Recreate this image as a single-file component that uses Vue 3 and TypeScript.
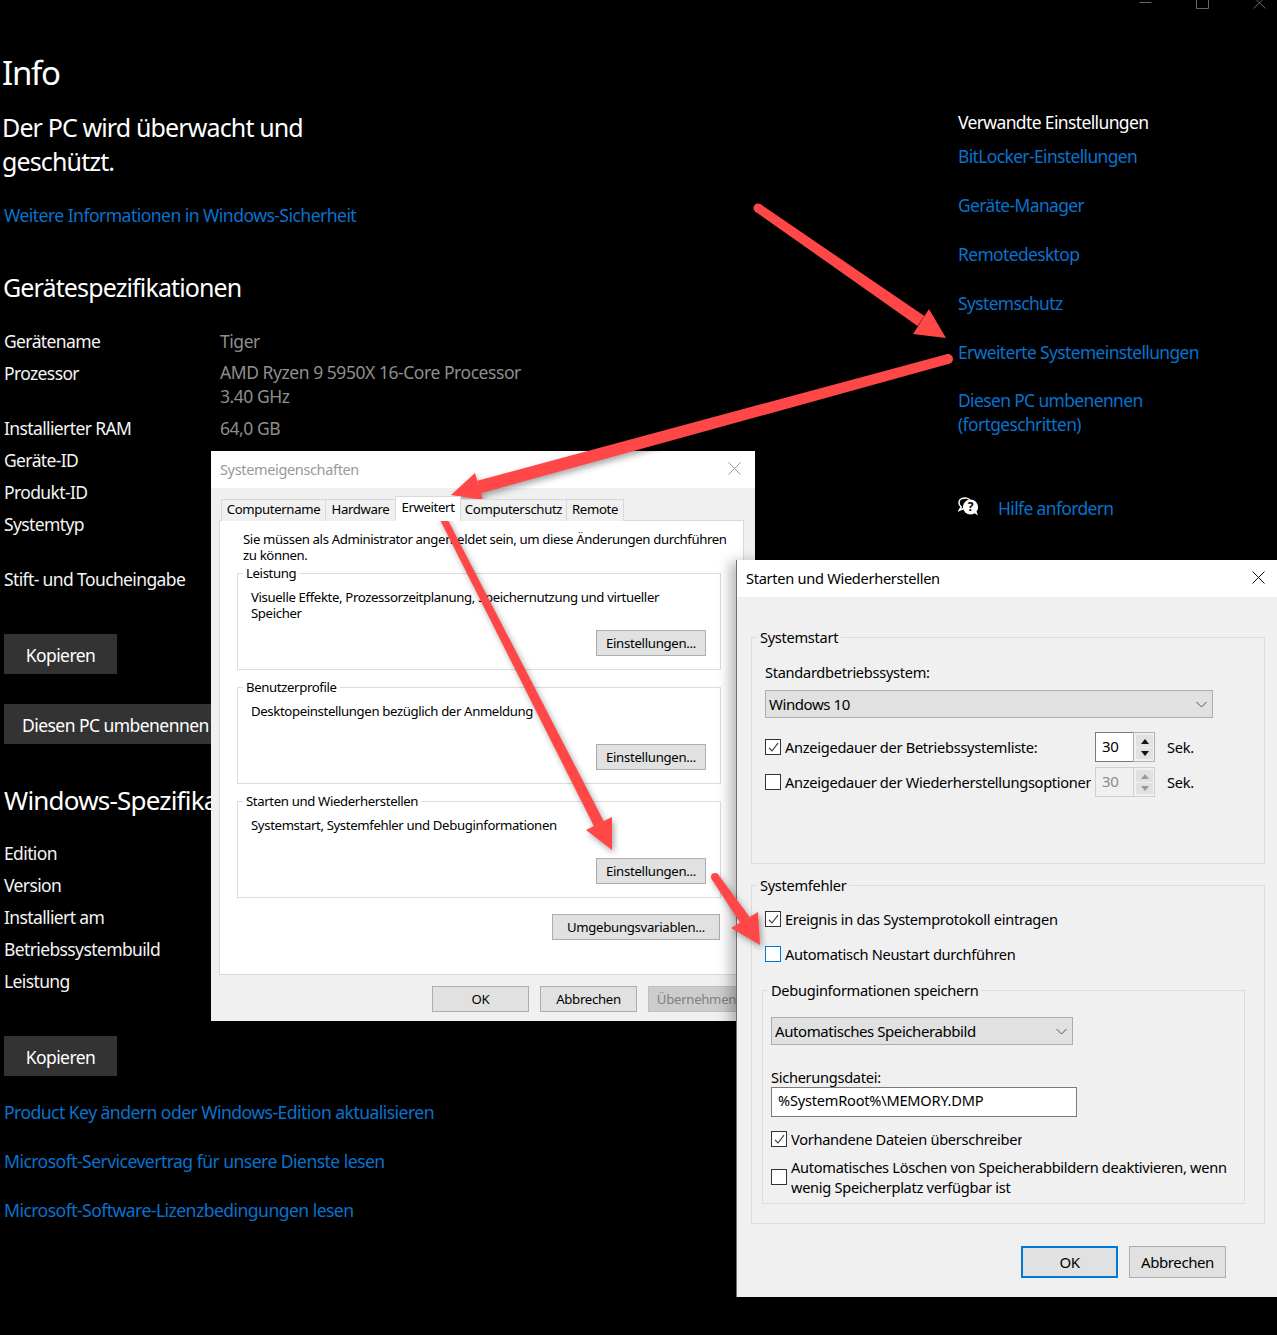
<script setup lang="ts">
type P = [number, number]
interface Arrow { from: P; neck: P; tip: P; b1: P; b2: P; w1: number; w2: number }

const arrows: Arrow[] = [
  { from: [758, 208], neck: [921, 321], tip: [946, 338], b1: [929, 309], b2: [913, 334], w1: 9, w2: 12 },
  { from: [948, 359], neck: [479, 487], tip: [451, 495], b1: [475, 473], b2: [483, 500], w1: 10, w2: 13 },
  { from: [443, 518], neck: [599, 824], tip: [612, 850], b1: [612, 817], b2: [586, 830], w1: 7, w2: 11 },
  { from: [715, 877], neck: [745, 920], tip: [760, 945], b1: [758, 912], b2: [731, 928], w1: 8, w2: 11 }
]

function shaft(a: Arrow): string {
  const dx = a.neck[0] - a.from[0]
  const dy = a.neck[1] - a.from[1]
  const len = Math.hypot(dx, dy)
  const nx = -dy / len
  const ny = dx / len
  const pts: P[] = [
    [a.from[0] + (nx * a.w1) / 2, a.from[1] + (ny * a.w1) / 2],
    [a.neck[0] + (nx * a.w2) / 2, a.neck[1] + (ny * a.w2) / 2],
    [a.neck[0] - (nx * a.w2) / 2, a.neck[1] - (ny * a.w2) / 2],
    [a.from[0] - (nx * a.w1) / 2, a.from[1] - (ny * a.w1) / 2]
  ]
  return pts.map((p) => p.join(',')).join(' ')
}

const head = (a: Arrow) => [a.tip, a.b1, a.b2].map((p) => p.join(',')).join(' ')

const relatedLinks = ['BitLocker-Einstellungen', 'Geräte-Manager', 'Remotedesktop', 'Systemschutz', 'Erweiterte Systemeinstellungen']
const bottomLinks = [
  'Product Key ändern oder Windows-Edition aktualisieren',
  'Microsoft-Servicevertrag für unsere Dienste lesen',
  'Microsoft-Software-Lizenzbedingungen lesen'
]
const winSpecs = ['Edition', 'Version', 'Installiert am', 'Betriebssystembuild', 'Leistung']
const tabs = [
  { label: 'Computername', width: 105 },
  { label: 'Hardware', width: 71 },
  { label: 'Erweitert', width: 66, active: true },
  { label: 'Computerschutz', width: 107 },
  { label: 'Remote', width: 58 }
]
</script>

<template>
  <div class="page">
    <div class="controls">
      <svg width="157" height="14" viewBox="0 0 157 14">
        <path d="M19.5 2.5H31.5" />
        <path d="M76.5 -4.5H88.5V8.5H76.5Z" />
        <path d="M133.5 -3L145.5 8.5M145.5 -3L133.5 8.5" />
      </svg>
    </div>

    <div class="columns">
      <main class="left">
        <h1 class="h-info">Info</h1>
        <h2 class="h-status">Der PC wird überwacht und<br />geschützt.</h2>
        <a class="link l-sec">Weitere Informationen in Windows-Sicherheit</a>
        <h2 class="h-sec h-dev">Gerätespezifikationen</h2>

        <div class="specs">
          <div class="spec"><span class="k">Gerätename</span><span class="v">Tiger</span></div>
          <div class="spec">
            <span class="k">Prozessor</span>
            <span class="v two">AMD Ryzen 9 5950X 16-Core Processor<br />3.40 GHz</span>
          </div>
          <div class="spec"><span class="k">Installierter RAM</span><span class="v">64,0 GB</span></div>
          <div class="spec"><span class="k">Geräte-ID</span></div>
          <div class="spec"><span class="k">Produkt-ID</span></div>
          <div class="spec"><span class="k">Systemtyp</span></div>
          <div class="spec spec-pen"><span class="k">Stift- und Toucheingabe</span></div>
        </div>

        <button class="dark-btn b-copy">Kopieren</button>
        <button class="dark-btn b-rename">Diesen PC umbenennen</button>

        <h2 class="h-sec h-win">Windows-Spezifikationen</h2>
        <div class="specs specs-win">
          <div v-for="s in winSpecs" :key="s" class="spec"><span class="k">{{ s }}</span></div>
        </div>

        <button class="dark-btn b-copy2">Kopieren</button>
        <a v-for="l in bottomLinks" :key="l" class="link l-bottom">{{ l }}</a>
      </main>

      <aside class="right">
        <div class="rel-head">Verwandte Einstellungen</div>
        <a v-for="(l, i) in relatedLinks" :key="l" class="link l-rel" :class="{ first: i === 0 }">{{ l }}</a>
        <a class="link l-rel l-rename">Diesen PC umbenennen<br />(fortgeschritten)</a>
        <div class="help">
          <svg class="help-icon" width="21" height="20" viewBox="0 0 21 20">
            <path class="bub" d="M5.5 1.2C2.8 1.2 1 3.2 1 5.7C1 7.6 2 9 3.2 9.8L1.2 13.3L6.4 11" />
            <path class="bub" d="M4.5 1.6C7 .4 10.7 .9 12 3.6" />
            <circle class="fill" cx="12.5" cy="10" r="7.6" />
            <path class="fill" d="M15.5 15.5L20 18.6L17.8 13Z" />
            <text x="12.5" y="14" text-anchor="middle" class="qm">?</text>
          </svg>
          <a class="link l-help">Hilfe anfordern</a>
        </div>
      </aside>
    </div>

    <section class="win win1">
      <header class="titlebar">
        <span class="t1-title">Systemeigenschaften</span>
        <svg class="x" width="13" height="13" viewBox="0 0 13 13"><path d="M.5 .5L12.5 12.5M12.5 .5L.5 12.5" /></svg>
      </header>
      <nav class="tabs">
        <div
          v-for="t in tabs"
          :key="t.label"
          class="tab"
          :class="{ active: t.active }"
          :style="{ width: t.width + 'px' }"
        >{{ t.label }}</div>
      </nav>
      <div class="panel">
        <p class="note">Sie müssen als Administrator angemeldet sein, um diese Änderungen durchführen<br />zu können.</p>
        <div class="box">
          <span class="legend">Leistung</span>
          <p>Visuelle Effekte, Prozessorzeitplanung, Speichernutzung und virtueller<br />Speicher</p>
          <button class="sbtn box-btn">Einstellungen...</button>
        </div>
        <div class="box">
          <span class="legend">Benutzerprofile</span>
          <p>Desktopeinstellungen bezüglich der Anmeldung</p>
          <button class="sbtn box-btn">Einstellungen...</button>
        </div>
        <div class="box">
          <span class="legend">Starten und Wiederherstellen</span>
          <p>Systemstart, Systemfehler und Debuginformationen</p>
          <button class="sbtn box-btn">Einstellungen...</button>
        </div>
        <button class="sbtn env-btn">Umgebungsvariablen...</button>
      </div>
      <footer class="w1-foot">
        <button class="sbtn f-btn">OK</button>
        <button class="sbtn f-btn">Abbrechen</button>
        <button class="sbtn f-btn disabled">Übernehmen</button>
      </footer>
    </section>

    <section class="win win2">
      <header class="titlebar tb2">
        <span>Starten und Wiederherstellen</span>
        <svg class="x x2" width="13" height="13" viewBox="0 0 13 13"><path d="M.5 .5L12.5 12.5M12.5 .5L.5 12.5" /></svg>
      </header>

      <div class="g2 g-start">
        <span class="legend2">Systemstart</span>
        <div class="lbl-std">Standardbetriebssystem:</div>
        <div class="select sel-os">
          <span>Windows 10</span>
          <svg width="11" height="7" viewBox="0 0 11 7"><path d="M.5 1L5.5 6L10.5 1" /></svg>
        </div>
        <div class="time-row tr1">
          <span class="cb">
            <svg width="13" height="13" viewBox="0 0 13 13"><path d="M2 6.8L5 10L11 2.2" /></svg>
          </span>
          <span class="cb-text clip-306">Anzeigedauer der Betriebssystemliste:</span>
          <div class="spin">
            <span class="spin-val">30</span>
            <span class="spin-btns"><i class="up"></i><i class="down"></i></span>
          </div>
          <span class="sek">Sek.</span>
        </div>
        <div class="time-row tr2">
          <span class="cb"></span>
          <span class="cb-text clip-306">Anzeigedauer der Wiederherstellungsoptionen</span>
          <div class="spin off">
            <span class="spin-val">30</span>
            <span class="spin-btns"><i class="up"></i><i class="down"></i></span>
          </div>
          <span class="sek">Sek.</span>
        </div>
      </div>

      <div class="g2 g-err">
        <span class="legend2">Systemfehler</span>
        <div class="cb-row cr1">
          <span class="cb">
            <svg width="13" height="13" viewBox="0 0 13 13"><path d="M2 6.8L5 10L11 2.2" /></svg>
          </span>
          <span class="cb-text">Ereignis in das Systemprotokoll eintragen</span>
        </div>
        <div class="cb-row cr2">
          <span class="cb focus"></span>
          <span class="cb-text">Automatisch Neustart durchführen</span>
        </div>

        <div class="g-debug">
          <span class="legend2">Debuginformationen speichern</span>
          <div class="select sel-dump">
            <span>Automatisches Speicherabbild</span>
            <svg width="11" height="7" viewBox="0 0 11 7"><path d="M.5 1L5.5 6L10.5 1" /></svg>
          </div>
          <div class="lbl-file">Sicherungsdatei:</div>
          <div class="file-in">%SystemRoot%\MEMORY.DMP</div>
          <div class="cb-row cr3">
            <span class="cb">
              <svg width="13" height="13" viewBox="0 0 13 13"><path d="M2 6.8L5 10L11 2.2" /></svg>
            </span>
            <span class="cb-text clip-231">Vorhandene Dateien überschreiben</span>
          </div>
          <div class="cb-row cr4">
            <span class="cb"></span>
            <span class="cb-text">Automatisches Löschen von Speicherabbildern deaktivieren, wenn<br />wenig Speicherplatz verfügbar ist</span>
          </div>
        </div>
      </div>

      <footer class="w2-foot">
        <button class="sbtn big primary">OK</button>
        <button class="sbtn big">Abbrechen</button>
      </footer>
    </section>

    <svg class="arrows" width="1277" height="1335" viewBox="0 0 1277 1335">
      <g v-for="(a, i) in arrows" :key="i">
        <circle :cx="a.from[0]" :cy="a.from[1]" :r="a.w1 / 2" />
        <polygon :points="shaft(a)" />
        <polygon :points="head(a)" />
      </g>
    </svg>
  </div>
</template>

<style>
html, body { margin: 0; background: #000; }
</style>

<style scoped>
* { box-sizing: border-box; }
.page {
  position: relative;
  width: 1277px;
  height: 1335px;
  overflow: hidden;
  background: #000;
  color: #fff;
  font-family: "Noto Sans", "Open Sans", sans-serif;
}
.controls { position: absolute; top: 0; right: 0; line-height: 0; }
.controls path { fill: none; stroke: #666; stroke-width: 1; }

.columns { display: flex; }
.left { width: 958px; display: flex; flex-direction: column; align-items: flex-start; padding-left: 4px; }
.right { display: flex; flex-direction: column; align-items: flex-start; width: 319px; padding-top: 110px; }

h1, h2, p { margin: 0; font-weight: 400; }
.h-info { margin: 50px 0 0 -2px; font-size: 33px; line-height: 46px; letter-spacing: -1.3px; }
.h-status { margin: 14px 0 0 -2px; font-size: 25px; line-height: 34px; letter-spacing: -.87px; }
.link { display: block; color: #0873cf; font-size: 17.6px; line-height: 24px; letter-spacing: -.56px; white-space: nowrap; }
.l-sec { margin-top: 25px; }
.h-sec { font-size: 25px; line-height: 36px; letter-spacing: -.87px; white-space: nowrap; }
.h-dev { margin: 42px 0 0 -1px; }
.h-win { margin-top: 38px; font-size: 26px; letter-spacing: -.8px; }

.specs { margin-top: 24px; display: flex; flex-direction: column; gap: 8px; }
.specs-win { margin-top: 23px; }
.spec { display: flex; font-size: 17.5px; line-height: 24px; letter-spacing: -.62px; white-space: nowrap; }
.spec-pen { margin-top: 23px; }
.k { width: 216px; color: #f4f4f4; }
.v { color: #8e8e8e; letter-spacing: -.45px; }
.two { line-height: 23.5px; }

.dark-btn {
  height: 40px;
  min-width: 113px;
  padding: 2px 18px 0;
  border: 0;
  background: #333;
  color: #fff;
  font: inherit;
  font-size: 17.5px;
  letter-spacing: -.55px;
  white-space: nowrap;
}
.b-copy { margin-top: 43px; }
.b-rename { margin-top: 30px; }
.b-copy2 { margin-top: 43px; margin-bottom: 24px; }
.l-bottom + .l-bottom { margin-top: 25px; }

.rel-head { font-size: 17.5px; line-height: 24px; letter-spacing: -.63px; }
.l-rel, .l-help { font-size: 17.4px; letter-spacing: -.6px; }
.l-rel { margin-top: 25px; }
.l-rel.first { margin-top: 10px; }
.l-rename { margin-top: 24px; }
.help { margin-top: 60px; display: flex; align-items: center; gap: 19px; height: 24px; }
.help-icon { display: block; margin-top: -2px; }
.bub { fill: none; stroke: #fff; stroke-width: 1.5; }
.fill { fill: #fff; }
.qm { fill: #000; font-size: 12px; font-weight: 700; font-family: "Noto Sans", sans-serif; }

/* windows */
.win { position: absolute; background: #f0f0f0; color: #000; }
.win1 { left: 211px; top: 451px; width: 544px; height: 570px; font-size: 13.2px; letter-spacing: -.37px; }
.win2 {
  left: 736px;
  top: 560px;
  width: 541px;
  height: 737px;
  border-left: 1px solid #707070;
  box-shadow: -6px 2px 12px rgba(0, 0, 0, .28);
  font-size: 14.6px;
  letter-spacing: -.29px;
}
.titlebar {
  height: 37px;
  display: flex;
  align-items: center;
  justify-content: space-between;
  padding: 0 14px 2px 9px;
  background: #fff;
}
.tb2 { padding: 0 12px 2px 9px; }
.t1-title { color: #999; font-size: 14.5px; letter-spacing: -.35px; }
.x path { fill: none; stroke: #999; stroke-width: 1; }
.x2 path { stroke: #111; }

.tabs { display: flex; align-items: flex-end; height: 32px; padding-left: 10px; position: relative; z-index: 1; }
.tab {
  height: 22px;
  margin-bottom: -1px;
  text-align: center;
  line-height: 19px;
  background: #f0f0f0;
  border: 1px solid #d9d9d9;
  border-bottom: 0;
  margin-right: -1px;
  white-space: nowrap;
  overflow: hidden;
}
.tab.active {
  height: 25px;
  background: #fff;
  line-height: 21px;
  position: relative;
  z-index: 2;
}
.panel {
  margin-left: 8px;
  width: 525px;
  height: 455px;
  padding: 10px 18px 0 17px;
  background: #fff;
  border: 1px solid #d9d9d9;
  display: flex;
  flex-direction: column;
  align-items: flex-start;
}
.note { margin-left: 6px; line-height: 16px; white-space: nowrap; }
.box {
  position: relative;
  width: 484px;
  height: 97px;
  margin-top: 17px;
  padding: 15px 14px 0 13px;
  border: 1px solid #dcdcdc;
  display: flex;
  flex-direction: column;
  justify-content: space-between;
}
.panel .note + .box { margin-top: 10px; }
.box p { line-height: 16px; white-space: nowrap; }
.legend {
  position: absolute;
  left: 5px;
  top: -9px;
  padding: 0 3px;
  background: #fff;
  line-height: 16px;
}
.sbtn {
  display: block;
  margin: 0;
  padding: 0;
  border: 1px solid #adadad;
  background: #e1e1e1;
  color: #000;
  font: inherit;
  letter-spacing: -.3px;
  white-space: nowrap;
}
.box-btn { align-self: flex-end; width: 110px; height: 26px; margin-bottom: 13px; }
.env-btn { width: 168px; height: 26px; margin-top: 16px; margin-left: 315px; }
.w1-foot { display: flex; justify-content: flex-end; gap: 11px; padding: 11px 10px 0 0; }
.f-btn { width: 97px; height: 26px; }
.disabled { background: #ccc; border-color: #bfbfbf; color: #808080; }

.g2 {
  position: relative;
  width: 514px;
  margin-left: 14px;
  padding: 0 0 0 13px;
  border: 1px solid #dcdcdc;
}
.g-start { height: 227px; margin-top: 40px; padding-top: 24px; }
.g-err { height: 339px; margin-top: 21px; padding-top: 23px; }
.legend2 {
  position: absolute;
  left: 5px;
  top: -11px;
  padding: 0 3px;
  background: #f0f0f0;
  line-height: 20px;
  white-space: nowrap;
}
.lbl-std { line-height: 20px; }
.select {
  height: 28px;
  display: flex;
  align-items: center;
  justify-content: space-between;
  padding: 0 5px 0 3px;
  background: #e1e1e1;
  border: 1px solid #adadad;
  font-size: 15px;
  letter-spacing: -.43px;
}
.select svg path { fill: none; stroke: #555; stroke-width: 1; }
.sel-os { width: 448px; margin-top: 8px; }
.sel-dump { width: 302px; margin-top: 26px; }

.time-row { display: flex; align-items: center; height: 30px; }
.tr1 { margin-top: 14px; }
.tr2 { margin-top: 5px; }
.cb {
  flex: none;
  width: 16px;
  height: 16px;
  border: 1px solid #333;
  background: #fff;
  display: flex;
  align-items: center;
  justify-content: center;
}
.cb svg path { fill: none; stroke: #333; stroke-width: 1.1; }
.cb.focus { border-color: #0078d7; }
.cb-text { margin-left: 4px; line-height: 20px; white-space: nowrap; }
.clip-306 { width: 306px; overflow: hidden; }
.clip-231 { width: 231px; overflow: hidden; }
.spin { display: flex; width: 60px; height: 100%; margin-left: 4px; }
.spin-val {
  width: 38px;
  padding: 2px 0 0 6px;
  background: #fff;
  border: 1px solid #7a7a7a;
  border-right: 0;
  line-height: 22px;
  font-size: 15px;
}
.spin-btns {
  flex: 1;
  display: flex;
  flex-direction: column;
  gap: 1px;
  padding: 2px 1px 2px 2px;
  border: 1px solid #b0b0b0;
  background: #f0f0f0;
}
.spin-btns i {
  flex: 1;
  display: block;
  position: relative;
  background: #e1e1e1;
}
.spin-btns i::after {
  content: "";
  position: absolute;
  left: 50%;
  top: 50%;
  margin: -2px 0 0 -4px;
  border-left: 4px solid transparent;
  border-right: 4px solid transparent;
}
.spin-btns .up::after { border-bottom: 5px solid #111; }
.spin-btns .down::after { border-top: 5px solid #111; }
.spin.off .spin-val { background: #f0f0f0; border-color: #cfcfcf; color: #8a8a8a; }
.spin.off .spin-btns { border-color: #cfcfcf; }
.spin.off .up::after { border-bottom-color: #999; }
.spin.off .down::after { border-top-color: #999; }
.sek { margin-left: 12px; }

.cb-row { display: flex; align-items: center; }
.cr2 { margin-top: 15px; }
.cr3 { margin-top: 12px; }
.cr4 { margin-top: 8px; }
.g-debug {
  position: relative;
  width: 483px;
  height: 214px;
  margin: 26px 0 0 -3px;
  padding: 0 0 0 8px;
  border: 1px solid #dcdcdc;
}
.lbl-file { margin-top: 23px; line-height: 19px; }
.file-in {
  width: 306px;
  height: 30px;
  padding: 1px 0 0 6px;
  background: #fff;
  border: 1px solid #7a7a7a;
  line-height: 22px;
  letter-spacing: -.22px;
}
.w2-foot { display: flex; justify-content: flex-end; gap: 11px; padding: 22px 51px 0 0; }
.big { width: 97px; height: 32px; font-size: 15px; letter-spacing: -.4px; }
.primary { border: 2px solid #0078d7; }

.arrows { position: absolute; left: 0; top: 0; filter: drop-shadow(2px 3px 3px rgba(0, 0, 0, .35)); pointer-events: none; }
.arrows circle, .arrows polygon { fill: #ff4747; }
</style>
